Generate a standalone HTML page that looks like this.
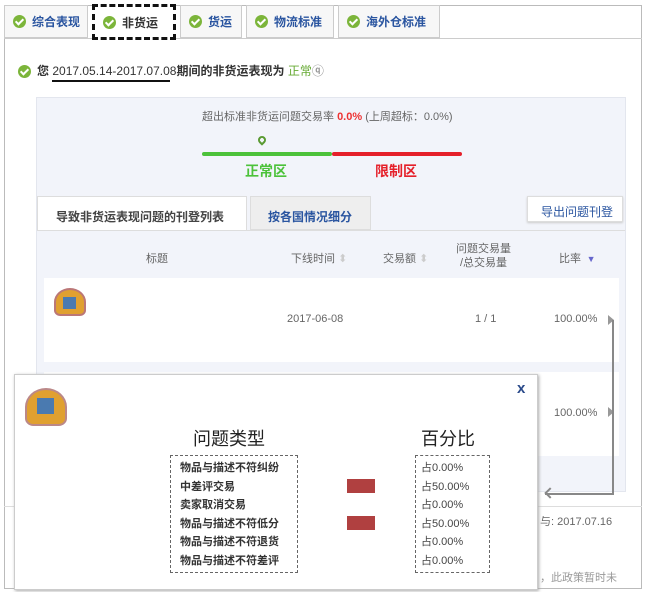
<!DOCTYPE html>
<html><head><meta charset="utf-8"><style>
*{box-sizing:border-box;margin:0;padding:0}
body{width:647px;height:592px;background:#fff;font-family:"Liberation Sans","Noto Sans CJK SC",sans-serif;position:relative;overflow:hidden;font-size:12px;color:#333}
.abs{position:absolute}
.outer{left:4px;top:5px;width:638px;height:584px;border:1px solid #bbb}
.tab{top:5px;height:33px;border:1px solid #ccc;background:#f7f7f7;font-size:12px;font-weight:bold;color:#2a55a0;display:flex;align-items:center;padding-left:8px}
.ck{width:13px;height:13px;border-radius:50%;background:#7cb53a;margin-right:6px;display:inline-block;position:relative;vertical-align:middle}
.ck:after{content:"";position:absolute;left:4px;top:2px;width:3px;height:6px;border:solid #fff;border-width:0 2px 2px 0;transform:rotate(45deg)}
.panel{left:36px;top:97px;width:590px;height:395px;background:#f2f4fa;border:1px solid #e3e6ee}
.row{background:#fff}
.g{color:#666}
</style></head><body>
<div class="abs outer"></div>
<div class="abs" style="left:4px;top:38px;width:638px;height:1px;background:#ccc"></div>
<div class="abs tab" style="left:4px;width:84px"><span class="ck"></span>综合表现</div>
<div class="abs tab" style="left:92px;width:84px;background:#fff;border:3px dashed #111;height:36px;top:4px;color:#333"><span class="ck"></span>非货运</div>
<div class="abs tab" style="left:180px;width:62px"><span class="ck"></span>货运</div>
<div class="abs tab" style="left:246px;width:88px"><span class="ck"></span>物流标准</div>
<div class="abs tab" style="left:338px;width:102px"><span class="ck"></span>海外仓标准</div>

<div class="abs" style="left:18px;top:62px;font-size:12px;font-weight:bold;color:#333"><span class="ck"></span>您 <span style="font-weight:normal">2017.05.14-2017.07.08</span>期间的非货运表现为 <span style="color:#6a3;font-weight:normal">正常</span><span style="color:#999">&#x24E0;</span></div>
<div class="abs" style="left:52px;top:80px;width:118px;height:2px;background:#111"></div>

<div class="abs panel"></div>
<div class="abs g" style="left:202px;top:108px;font-size:11px">超出标准非货运问题交易率 <b style="color:#e33">0.0%</b> (上周超标：0.0%)</div>
<div class="abs" style="left:258px;top:136px;width:8px;height:8px;border-radius:50% 50% 50% 0;transform:rotate(-45deg);border:2px solid #5a9a32"></div>
<div class="abs" style="left:202px;top:152px;width:130px;height:4px;background:#4cc23a;border-radius:2px"></div>
<div class="abs" style="left:332px;top:152px;width:130px;height:4px;background:#e5202a;border-radius:2px"></div>
<div class="abs" style="left:245px;top:161px;font-size:14px;color:#4cc23a;font-weight:bold">正常区</div>
<div class="abs" style="left:375px;top:161px;font-size:14px;color:#e5202a;font-weight:bold">限制区</div>

<div class="abs" style="left:37px;top:196px;width:210px;height:35px;background:#fff;border:1px solid #ddd;border-bottom:none;font-weight:bold;color:#444;padding:11px 0 0 18px;font-size:12px">导致非货运表现问题的刊登列表</div>
<div class="abs" style="left:250px;top:196px;width:121px;height:34px;background:#eee;border:1px solid #ddd;font-weight:bold;color:#2a55a0;padding:11px 0 0 17px;font-size:12px">按各国情况细分</div>
<div class="abs" style="left:527px;top:196px;width:96px;height:26px;background:#fff;border:1px solid #ddd;box-shadow:0 1px 2px #ccc;color:#2a55a0;padding:6px 0 0 13px;font-size:12px">导出问题刊登</div>
<div class="abs" style="left:37px;top:230px;width:588px;height:1px;background:#ddd"></div>

<div class="abs g" style="left:146px;top:250px;font-size:11px">标题</div>
<div class="abs g" style="left:291px;top:250px;font-size:11px">下线时间 <span style="color:#ccc">⬍</span></div>
<div class="abs g" style="left:383px;top:250px;font-size:11px">交易额 <span style="color:#ccc">⬍</span></div>
<div class="abs g" style="left:456px;top:242px;font-size:11px;line-height:14px;text-align:center">问题交易量<br>/总交易量</div>
<div class="abs g" style="left:559px;top:250px;font-size:11px">比率 <span style="color:#66c;font-size:9px">&nbsp;▼</span></div>

<div class="abs row" style="left:44px;top:278px;width:575px;height:84px"></div>
<div class="abs" style="left:54px;top:288px;width:32px;height:28px;border-radius:50% 50% 20% 20%;background:#e0a030;border:2px solid #b77"></div>
<div class="abs" style="left:63px;top:297px;width:13px;height:12px;background:#4a7ab0"></div>
<div class="abs g" style="left:287px;top:313px;font-size:11px">2017-06-08</div>
<div class="abs g" style="left:475px;top:313px;font-size:11px">1 / 1</div>
<div class="abs g" style="left:554px;top:313px;font-size:11px">100.00%</div>
<div class="abs row" style="left:44px;top:372px;width:575px;height:84px"></div>
<div class="abs g" style="left:554px;top:407px;font-size:11px">100.00%</div>
<div class="abs" style="left:608px;top:315px;border-left:6px solid #999;border-top:5px solid transparent;border-bottom:5px solid transparent"></div>
<div class="abs" style="left:608px;top:407px;border-left:6px solid #999;border-top:5px solid transparent;border-bottom:5px solid transparent"></div>
<div class="abs" style="left:612px;top:320px;width:2px;height:175px;background:#888"></div>
<div class="abs" style="left:545px;top:493px;width:69px;height:2px;background:#888"></div>
<div class="abs" style="left:546px;top:489px;width:8px;height:8px;border-left:2px solid #888;border-bottom:2px solid #888;transform:rotate(45deg)"></div>
<div class="abs" style="left:4px;top:506px;width:638px;height:1px;background:#ddd"></div>
<div class="abs g" style="left:540px;top:513px;font-size:11px">与: 2017.07.16</div>
<div class="abs g" style="left:540px;top:569px;font-size:11px;color:#999">，此政策暂时未</div>

<div class="abs" style="left:14px;top:374px;width:524px;height:216px;background:#fff;border:1px solid #ccc;box-shadow:1px 1px 3px #aaa"></div>
<div class="abs" style="left:517px;top:380px;font-size:15px;font-weight:bold;color:#2a4a8a">x</div>
<div class="abs" style="left:25px;top:388px;width:42px;height:38px;border-radius:50% 50% 20% 20%;background:#e0a030;border:2px solid #b88"></div>
<div class="abs" style="left:37px;top:398px;width:17px;height:16px;background:#4a7ab0"></div>
<div class="abs" style="left:193px;top:425px;font-size:18px;color:#222">问题类型</div>
<div class="abs" style="left:421px;top:425px;font-size:18px;color:#222">百分比</div>
<div class="abs" style="left:170px;top:455px;width:128px;height:118px;border:1px dashed #666"></div>
<div class="abs" style="left:415px;top:455px;width:75px;height:118px;border:1px dashed #666"></div>
<div class="abs" style="left:180px;top:459px;font-size:11px;line-height:18.5px;font-weight:bold;color:#333">物品与描述不符纠纷<br>中差评交易<br>卖家取消交易<br>物品与描述不符低分<br>物品与描述不符退货<br>物品与描述不符差评</div>
<div class="abs" style="left:421px;top:459px;font-size:11px;line-height:18.5px;color:#444">占0.00%<br>占50.00%<br>占0.00%<br>占50.00%<br>占0.00%<br>占0.00%</div>
<div class="abs" style="left:347px;top:479px;width:28px;height:14px;background:#b04040"></div>
<div class="abs" style="left:347px;top:516px;width:28px;height:14px;background:#b04040"></div>
</body></html>
